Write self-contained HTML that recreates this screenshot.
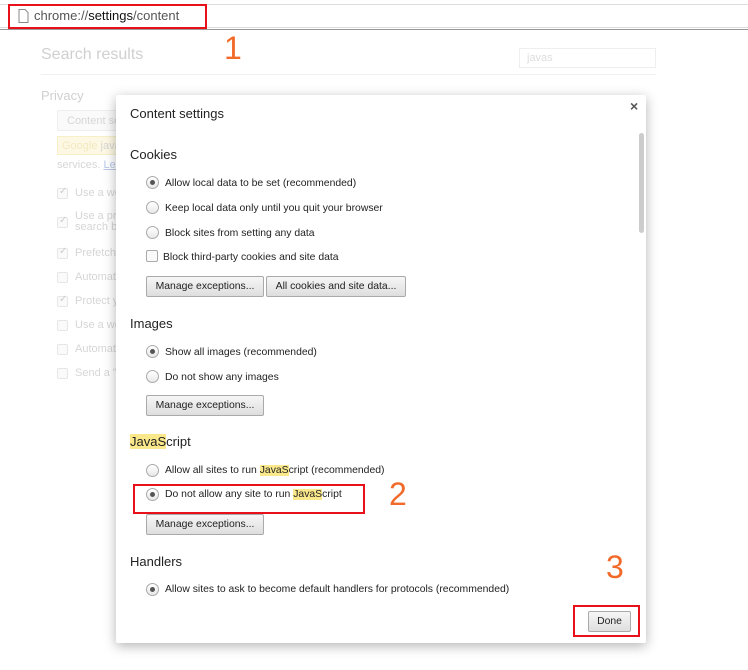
<!DOCTYPE html>
<html><head><meta charset="utf-8"><style>
*{margin:0;padding:0;box-sizing:border-box}
body{width:748px;height:670px;background:#fff;font-family:"Liberation Sans",Arial,sans-serif;position:relative;overflow:hidden;color:#333}
.a{position:absolute;white-space:nowrap}
.bg{color:#d6d6d6;font-size:11px}
.cb{position:absolute;width:11px;height:11px;border:1px solid #e6e6e6;border-radius:2px;background:#fafafa}
.chk::after{content:"✓";position:absolute;left:1px;top:-3px;font-size:10px;color:#ccc}
.dlg{position:absolute;left:116px;top:95px;width:530px;height:548px;background:#fff;box-shadow:0 3px 12px rgba(0,0,0,.3);border-radius:2px}
.h{position:absolute;left:14px;font-size:13px;color:#222}
.r{position:absolute;left:30px;width:13px;height:13px;border:1px solid #aaa;border-radius:50%;background:linear-gradient(#fff,#e8e8e8)}
.r.on::after{content:"";position:absolute;left:3px;top:3px;width:5px;height:5px;border-radius:50%;background:#555}
.t{position:absolute;left:49px;font-size:10.4px;color:#222;white-space:nowrap;margin-top:2px}
.btn{position:absolute;height:21px;border:1px solid #aaa;border-radius:2px;background:linear-gradient(#f6f6f6,#dedede);font-size:10.4px;color:#222;text-align:center;line-height:19px}
.hl{background:#fbe88a}
.red{position:absolute;border:2px solid #e8101a}
.num{position:absolute;color:#f26a2a;font-size:32px;font-weight:300}
</style></head><body>
<div class="a" style="left:0;top:29px;width:748px;height:1px;background:#999"></div>
<div class="a" style="left:0;top:4px;width:748px;height:24px;border-top:1px solid #ddd;border-bottom:1px solid #ddd"></div>
<svg class="a" style="left:18px;top:9px" width="11" height="14"><path d="M1 .5h6l3 3v10H1z" fill="#fff" stroke="#888"/></svg>
<div class="a" style="left:34px;top:8px;font-size:13px;color:#555">chrome://<span style="color:#111">settings</span>/content</div>
<div class="red" style="left:8px;top:4px;width:199px;height:25px"></div>
<div class="num" style="left:224px;top:30px">1</div>

<div class="a" style="left:41px;top:46px;font-size:16px;color:#d0d0d0">Search results</div>
<div class="a" style="left:41px;top:74px;width:615px;height:1px;background:#f0f0f0"></div>
<div class="a" style="left:519px;top:48px;width:137px;height:20px;border:1px solid #eee;font-size:11px;color:#ddd;padding:3px 7px">javas</div>
<div class="a" style="left:41px;top:88px;font-size:13px;color:#d0d0d0">Privacy</div>
<div class="a bg" style="left:57px;top:110px;width:70px;height:21px;border:1px solid #eee;border-radius:2px;padding:4px 9px;background:#fafafa">Content se</div>
<div class="a bg" style="left:57px;top:136px;width:70px;height:19px;background:#fdf8e4;border:1px solid #f7efc8;padding:3px 4px"><span style="color:#f3e9c0">Google </span>java</div>
<div class="a bg" style="left:57px;top:159px">services. <span style="color:#b8c8e8;text-decoration:underline">Lea</span></div>
<div class="cb chk" style="left:57px;top:188px"></div><div class="a bg" style="left:75px;top:187px">Use a we</div>
<div class="cb chk" style="left:57px;top:217px"></div><div class="a bg" style="left:75px;top:211px;line-height:11px">Use a pr<br>search b</div>
<div class="cb chk" style="left:57px;top:248px"></div><div class="a bg" style="left:75px;top:247px">Prefetch</div>
<div class="cb" style="left:57px;top:272px"></div><div class="a bg" style="left:75px;top:271px">Automati</div>
<div class="cb chk" style="left:57px;top:296px"></div><div class="a bg" style="left:75px;top:295px">Protect y</div>
<div class="cb" style="left:57px;top:320px"></div><div class="a bg" style="left:75px;top:319px">Use a we</div>
<div class="cb" style="left:57px;top:344px"></div><div class="a bg" style="left:75px;top:343px">Automati</div>
<div class="cb" style="left:57px;top:368px"></div><div class="a bg" style="left:75px;top:367px">Send a "</div>

<div class="dlg">
<div class="h" style="top:11px">Content settings</div>
<div class="a" style="left:514px;top:3px;font-size:14px;color:#555;font-weight:bold">×</div>
<div class="a" style="left:523px;top:38px;width:5px;height:100px;background:#ccc;border-radius:3px"></div>
<div class="h" style="top:52px">Cookies</div>
<div class="r on" style="top:81px"></div><div class="t" style="top:81px">Allow local data to be set (recommended)</div>
<div class="r" style="top:106px"></div><div class="t" style="top:106px">Keep local data only until you quit your browser</div>
<div class="r" style="top:131px"></div><div class="t" style="top:131px">Block sites from setting any data</div>
<div class="a" style="left:30px;top:155px;width:12px;height:12px;border:1px solid #aaa;border-radius:2px;background:#fafafa"></div><div class="t" style="left:47px;top:155px">Block third-party cookies and site data</div>
<div class="btn" style="left:30px;top:181px;width:118px">Manage exceptions...</div>
<div class="btn" style="left:150px;top:181px;width:140px">All cookies and site data...</div>
<div class="h" style="top:221px">Images</div>
<div class="r on" style="top:250px"></div><div class="t" style="top:250px">Show all images (recommended)</div>
<div class="r" style="top:275px"></div><div class="t" style="top:275px">Do not show any images</div>
<div class="btn" style="left:30px;top:300px;width:118px">Manage exceptions...</div>
<div class="h" style="top:339px"><span class="hl">JavaS</span>cript</div>
<div class="r" style="top:369px"></div><div class="t" style="top:368px">Allow all sites to run <span class="hl">JavaS</span>cript (recommended)</div>
<div class="r on" style="top:393px"></div><div class="t" style="top:392px">Do not allow any site to run <span class="hl">JavaS</span>cript</div>
<div class="btn" style="left:30px;top:419px;width:118px">Manage exceptions...</div>
<div class="h" style="top:459px">Handlers</div>
<div class="r on" style="top:488px"></div><div class="t" style="top:487px">Allow sites to ask to become default handlers for protocols (recommended)</div>
<div class="btn" style="left:472px;top:516px;width:43px">Done</div>
</div>
<div class="red" style="left:133px;top:484px;width:232px;height:30px"></div>
<div class="num" style="left:389px;top:476px">2</div>
<div class="red" style="left:573px;top:605px;width:67px;height:32px"></div>
<div class="num" style="left:606px;top:549px">3</div>
</body></html>
